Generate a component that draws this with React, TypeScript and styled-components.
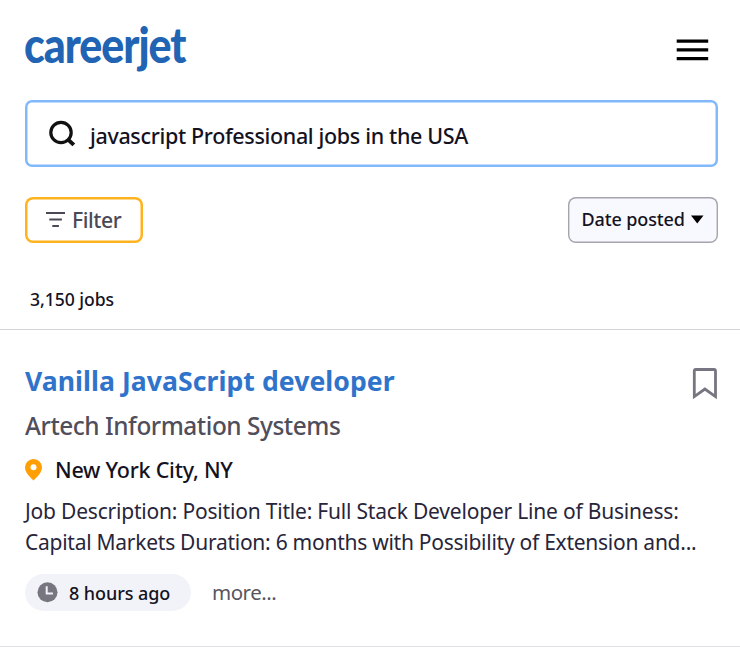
import React from 'react';
import styled, { createGlobalStyle } from 'styled-components';

const GlobalStyle = createGlobalStyle`
  * { box-sizing: border-box; }
  body {
    margin: 0;
    background: #fff;
    color: #14121f;
    font-family: "Noto Sans", "Open Sans", sans-serif;
  }
  button { font-family: inherit; cursor: pointer; }
  svg { display: block; flex: none; }
`;

const Page = styled.div`
  width: 100%;
  height: 669px;
  overflow: hidden;
`;

const Header = styled.header`
  display: flex;
  justify-content: space-between;
  height: 100px;
  padding: 0 28px 0 20px;
`;

const Wordmark = styled.text`
  font: 900 50px Lato, sans-serif;
  letter-spacing: -1.2px;
  fill: #2164b4;
`;

const MenuButton = styled.button`
  align-self: flex-start;
  margin: 35px 0 0;
  padding: 0;
  border: 0;
  background: none;
`;

const SearchBox = styled.div`
  display: flex;
  align-items: center;
  height: 67px;
  margin: 0 22.5px 0 25px;
  padding: 0 22px 0 24px;
  box-shadow: inset 0 0 0 2.5px #82b8fc;
  border-radius: 7px;
`;

const Query = styled.span`
  margin: 4px 0 0 13px;
  font-size: 21.5px;
  font-weight: 500;
  line-height: 30px;
  letter-spacing: -0.34px;
  white-space: nowrap;
`;

const Toolbar = styled.div`
  display: flex;
  justify-content: space-between;
  padding: 29.5px 22.5px 0 25px;
`;

const FilterButton = styled.button`
  display: flex;
  align-items: center;
  gap: 6px;
  width: 117.5px;
  height: 46px;
  padding: 0 0 0 21px;
  border: 0;
  box-shadow: inset 0 0 0 2.5px #ffb31f;
  border-radius: 8px;
  background: #fff;
  color: #4b4957;
  font-size: 21.2px;
  font-weight: 500;
  letter-spacing: -0.45px;
`;

const SortButton = styled.button`
  display: flex;
  align-items: center;
  gap: 6px;
  width: 150px;
  height: 46px;
  padding: 0 0 1px 14px;
  border: 0;
  box-shadow: inset 0 0 0 1.4px #a5a4ae;
  border-radius: 8px;
  background: #f8f9fe;
  color: #14121f;
  font-size: 18px;
  font-weight: 500;
  letter-spacing: -0.12px;
  white-space: nowrap;
`;

const ResultCount = styled.div`
  height: 87.5px;
  padding: 43.5px 0 0 30px;
  border-bottom: 1px solid #d3d3dc;
  font-size: 17.6px;
  font-weight: 500;
  line-height: 26px;
  letter-spacing: -0.05px;
`;

const JobCard = styled.article`
  height: 317px;
  padding: 32px 22px 0 25px;
  border-bottom: 1px solid #dfdfe5;
`;

const TitleRow = styled.div`
  display: flex;
  justify-content: space-between;
  align-items: flex-start;
`;

const Title = styled.h2`
  margin: 0;
  color: #2f74ca;
  font-size: 26.6px;
  font-weight: 700;
  line-height: 38px;
  letter-spacing: 0.05px;
`;

const SaveButton = styled.button`
  margin-top: 5px;
  padding: 0;
  border: 0;
  background: none;
`;

const Company = styled.div`
  margin-top: 7px;
  color: #504e5b;
  font-size: 24.4px;
  font-weight: 500;
  line-height: 36px;
  letter-spacing: -0.45px;
`;

const Location = styled.div`
  display: flex;
  align-items: center;
  gap: 13px;
  height: 32px;
  margin-top: 10px;
  font-size: 21.5px;
  font-weight: 500;
  line-height: 32px;
  letter-spacing: -0.24px;
`;

const Summary = styled.p`
  margin: 10px 0 0;
  color: #28253a;
  font-size: 21px;
  line-height: 31px;
  white-space: nowrap;
`;

const SummaryLine = styled.span<{ $spacing: number }>`
  display: block;
  letter-spacing: ${({ $spacing }) => $spacing}px;
`;

const Footer = styled.div`
  display: flex;
  align-items: center;
  gap: 21px;
  height: 37px;
  margin-top: 16px;
`;

const AgeBadge = styled.span`
  display: flex;
  align-items: center;
  gap: 11px;
  width: 166px;
  height: 37px;
  padding-left: 12px;
  border-radius: 19px;
  background: #f2f3f8;
  font-size: 18px;
  font-weight: 500;
  letter-spacing: -0.08px;
  white-space: nowrap;
`;

const MoreLink = styled.a`
  padding-bottom: 2px;
  color: #575562;
  font-size: 20.5px;
  letter-spacing: -0.5px;
`;

const Logo = () => (
  <svg width="172" height="96" viewBox="0 0 172 96" role="img" aria-label="careerjet">
    <Wordmark x="4" y="62.5" textLength="161.5" lengthAdjust="spacingAndGlyphs">careerjet</Wordmark>
  </svg>
);

const MenuIcon = () => (
  <svg width="36" height="30" viewBox="0 0 36 30">
    <path d="M.7 6.1h31.5M.7 14.9h31.5M.7 23.6h31.5" stroke="#000" strokeWidth="3.1" />
  </svg>
);

const SearchIcon = () => (
  <svg width="28" height="28" viewBox="0 0 28 28" fill="none" stroke="#111">
    <circle cx="12" cy="12.5" r="10.2" strokeWidth="3.2" />
    <path d="m19.1 19.6 5.7 5.3" strokeWidth="4" />
  </svg>
);

const FilterIcon = () => (
  <svg width="20" height="18" viewBox="0 0 20 18">
    <path d="M0 2h19M3.3 8.6h12.6M6.3 15h6.6" stroke="#4b4957" strokeWidth="2" />
  </svg>
);

const CaretIcon = () => (
  <svg width="13" height="9" viewBox="0 0 13 9">
    <path d="M0 .5h12.5L6.25 8.5z" fill="#000" />
  </svg>
);

const BookmarkIcon = () => (
  <svg width="26" height="34" viewBox="0 0 26 34">
    <path d="M2.3 29.6V4q0-1.5 1.5-1.5h18.2q1.5 0 1.5 1.5v25.6L12.9 22z" fill="none" stroke="#777580" strokeWidth="2.8" />
  </svg>
);

const PinIcon = () => (
  <svg width="17" height="22" viewBox="0 0 17 22">
    <path d="M8.5 0A8.4 8.4 0 0 0 0 8.5C0 14.2 6.3 19 8.5 21.5 10.7 19 17 14.2 17 8.5A8.4 8.4 0 0 0 8.5 0Z" fill="#ff9f05" />
    <circle cx="8.5" cy="8.3" r="3" fill="#fff" />
  </svg>
);

const ClockIcon = () => (
  <svg width="21" height="21" viewBox="0 0 21 21">
    <circle cx="10.5" cy="10.3" r="10" fill="#777580" />
    <path d="M9.7 4.2v7.2h6.2" fill="none" stroke="#f2f3f8" strokeWidth="2" />
  </svg>
);

export default function App() {
  return (
    <Page>
      <GlobalStyle />
      <Header>
        <Logo />
        <MenuButton aria-label="Menu"><MenuIcon /></MenuButton>
      </Header>
      <SearchBox>
        <SearchIcon />
        <Query>javascript Professional jobs in the USA</Query>
      </SearchBox>
      <Toolbar>
        <FilterButton><FilterIcon />Filter</FilterButton>
        <SortButton>Date posted<CaretIcon /></SortButton>
      </Toolbar>
      <ResultCount>3,150 jobs</ResultCount>
      <JobCard>
        <TitleRow>
          <Title>Vanilla JavaScript developer</Title>
          <SaveButton aria-label="Save job"><BookmarkIcon /></SaveButton>
        </TitleRow>
        <Company>Artech Information Systems</Company>
        <Location><PinIcon />New York City, NY</Location>
        <Summary>
          <SummaryLine $spacing={-0.2}>Job Description: Position Title: Full Stack Developer Line of Business:</SummaryLine>
          <SummaryLine $spacing={-0.26}>Capital Markets Duration: 6 months with Possibility of Extension and...</SummaryLine>
        </Summary>
        <Footer>
          <AgeBadge><ClockIcon />8 hours ago</AgeBadge>
          <MoreLink>more...</MoreLink>
        </Footer>
      </JobCard>
    </Page>
  );
}
